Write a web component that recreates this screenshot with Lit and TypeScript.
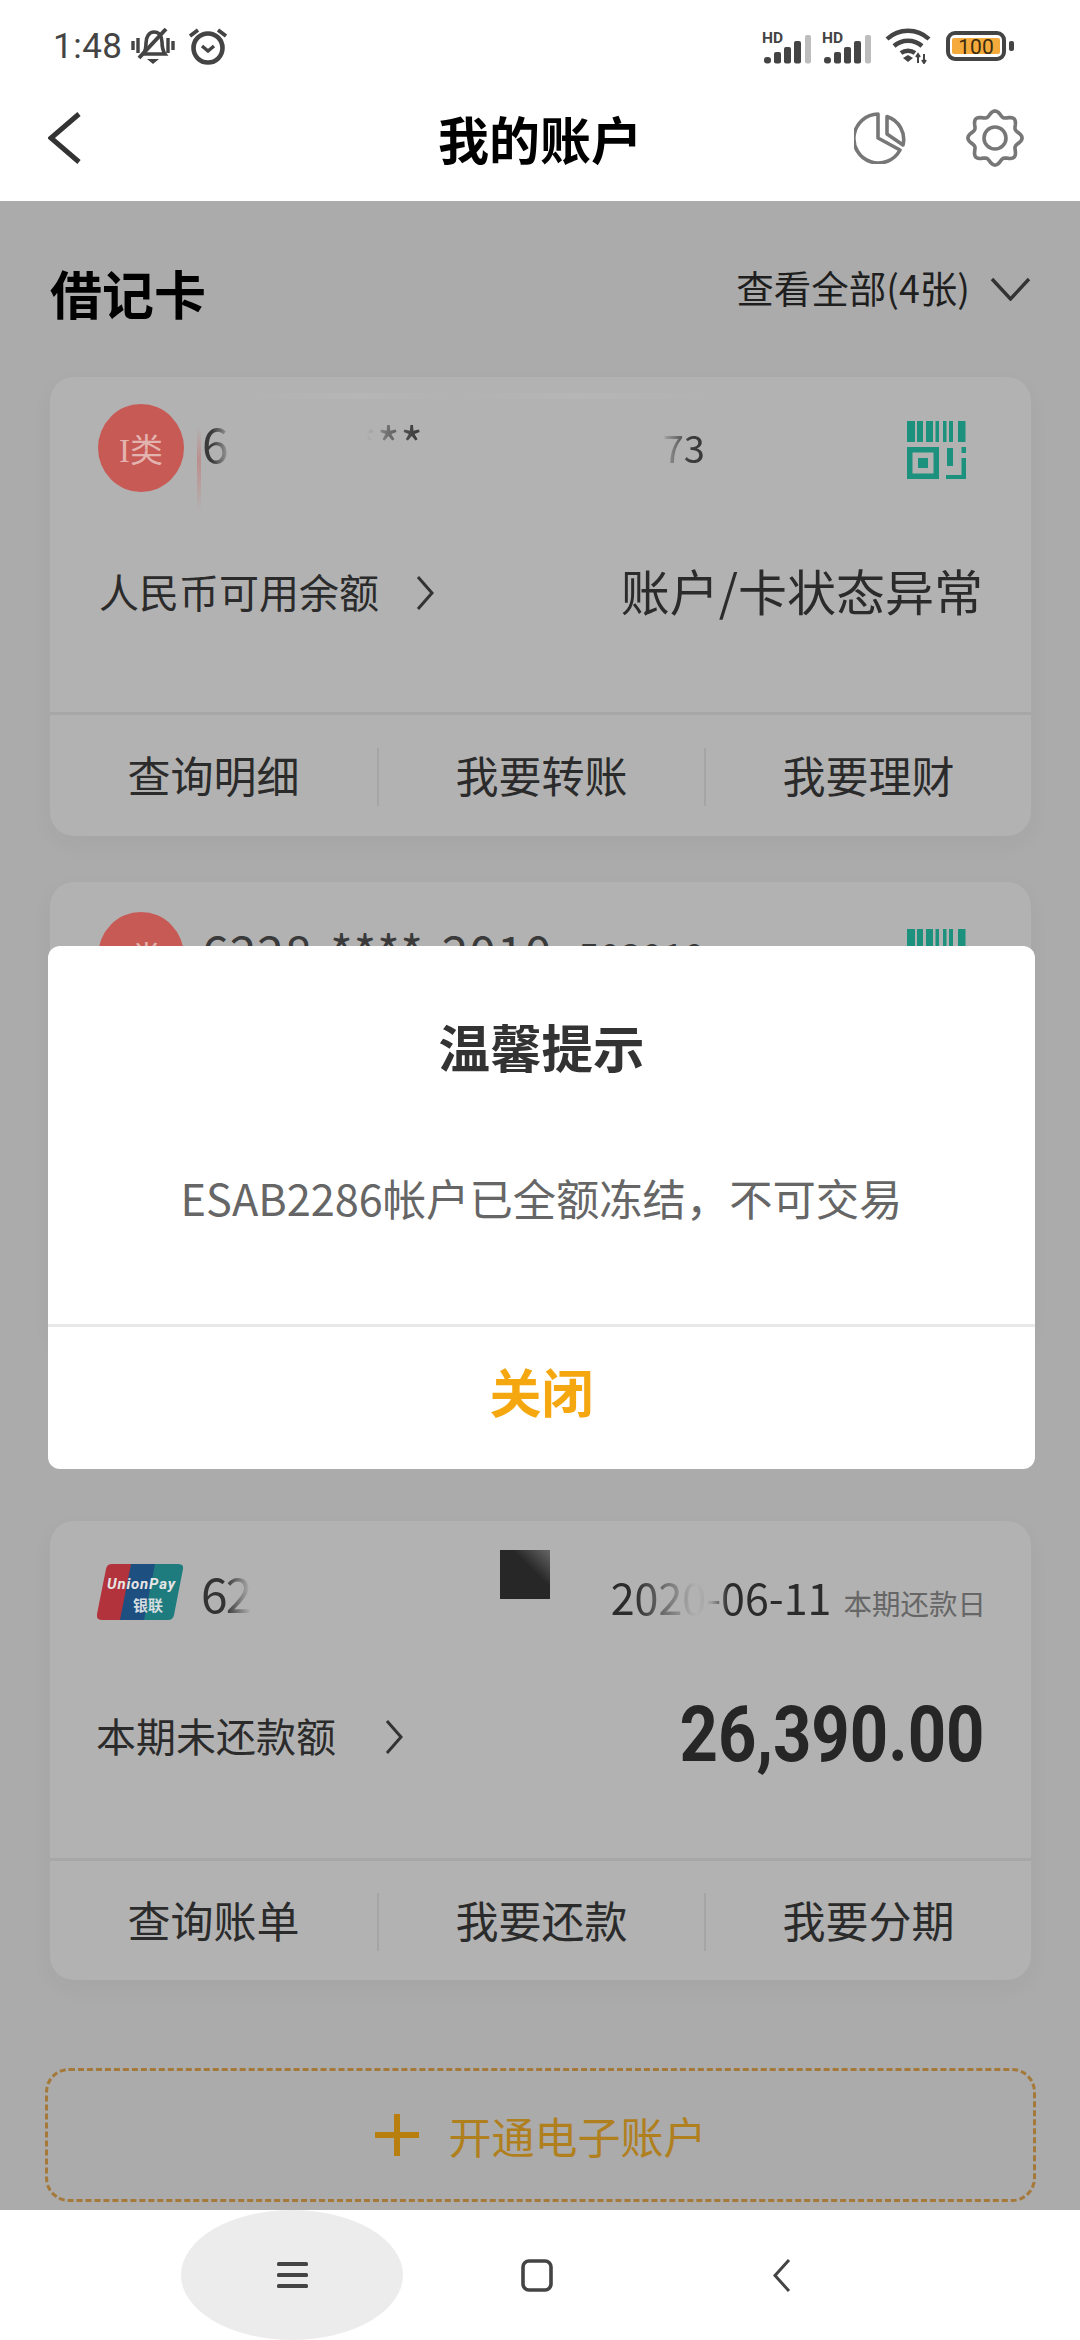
import { LitElement, html, css, svg } from 'lit';
import { customElement } from 'lit/decorators.js';

// wavy outline for the settings gear
function gearPath(cx: number, cy: number) {
  const pts: string[] = [];
  for (let i = 0; i < 96; i++) {
    const a = (i / 96) * Math.PI * 2 - Math.PI / 2;
    const r = 24.5 + 2.6 * Math.cos(8 * (a + Math.PI / 2));
    pts.push(`${(cx + r * Math.cos(a)).toFixed(2)},${(cy + r * Math.sin(a)).toFixed(2)}`);
  }
  return `M${pts.join('L')}Z`;
}

const signal = svg`
  <svg class="signal" width="50" height="36" viewBox="0 -4 50 36">
    <text x="0" y="11" font-family="Roboto, sans-serif" font-weight="700" font-size="15.500" fill="#444">HD</text>
    <rect x="2" y="25" width="7" height="6.500" rx="3" fill="#444"/>
    <rect x="12" y="20" width="7" height="11.500" rx="2" fill="#444"/>
    <rect x="22" y="15" width="7" height="16.500" rx="2" fill="#444"/>
    <rect x="32" y="9" width="7" height="22.500" rx="2" fill="#444"/>
    <rect x="43" y="3" width="6" height="28.500" rx="2" fill="#bdbdbd"/>
  </svg>`;

const qrIcon = svg`
  <svg class="qr" width="59" height="58" viewBox="0 0 59 58" fill="#1c917d">
    <rect x="0" y="0" width="8" height="21"/><rect x="10" y="0" width="6" height="21"/>
    <rect x="19" y="0" width="7" height="21"/><rect x="28.500" y="0" width="3.500" height="21"/>
    <rect x="36" y="0" width="3.500" height="21"/><rect x="42" y="0" width="4" height="21"/>
    <rect x="51" y="0" width="7.500" height="21"/>
    <path d="M0 26h32v32H0zM5.500 31.500v21h21v-21zM11 37h10v10H11z" fill-rule="evenodd"/>
    <rect x="40" y="27" width="6" height="18"/>
    <rect x="54.500" y="26" width="4.500" height="6"/>
    <rect x="54.500" y="37" width="4.500" height="21"/>
    <rect x="39" y="54" width="20" height="4"/>
  </svg>`;

const chevronRight = svg`
  <svg class="chev" width="18" height="34" viewBox="0 0 18 34" fill="none" stroke="#333" stroke-width="3">
    <path d="M2 1l14 16L2 33"/>
  </svg>`;

@customElement('app-root')
export class AppRoot extends LitElement {
  static styles = css`
    :host {
      display: block;
      width: 1080px;
      height: 2340px;
      position: relative;
      overflow: hidden;
      font-family: 'Noto Sans CJK SC', 'Noto Sans', sans-serif;
      color: #2b2b2b;
    }
    .page {
      display: flex;
      flex-direction: column;
      height: 100%;
    }
    .top {
      background: #fff;
      height: 201px;
      flex: none;
    }
    .status {
      display: flex;
      align-items: center;
      height: 92px;
      padding: 0 66px 0 53px;
      box-sizing: border-box;
    }
    .time {
      font-family: Roboto, sans-serif;
      font-size: 35px;
      color: #444;
      letter-spacing: 0.5px;
      margin-right: 8px;
    }
    .status .alarm {
      margin-left: 13px;
    }
    .status-right {
      margin-left: auto;
      display: flex;
      align-items: center;
    }
    .signal + .signal {
      margin-left: 10px;
    }
    .wifi {
      margin-left: 13px;
    }
    .battery {
      margin-left: 15px;
    }
    .bar {
      display: flex;
      align-items: center;
      height: 92px;
      padding: 0 56px 0 48px;
    }
    .title {
      position: absolute;
      left: 0;
      width: 1080px;
      text-align: center;
      font-size: 51px;
      font-weight: 700;
      color: #000;
      line-height: 88px;
    }
    .bar-icons {
      margin-left: auto;
      display: flex;
      align-items: center;
      gap: 60px;
    }
    .content {
      flex: 1;
      background: #ababab;
      padding: 0 49px 0 50px;
      overflow: hidden;
    }
    .sec-head {
      height: 176px;
      display: flex;
      align-items: center;
      justify-content: space-between;
    }
    .sec-title {
      font-size: 52px;
      font-weight: 700;
      color: #000;
      padding-top: 6px;
    }
    .view-all {
      display: flex;
      align-items: center;
      gap: 20px;
      font-size: 37.500px;
      color: #1f1f1f;
    }
    .view-all span {
      padding-bottom: 5px;
    }
    .card {
      position: relative;
      height: 459px;
      margin-bottom: 46px;
      background: #b2b2b2;
      border-radius: 24px;
      box-shadow: 0 8px 24px rgba(0, 0, 0, 0.035);
      display: flex;
      flex-direction: column;
      overflow: hidden;
    }
    .card.credit {
      margin-top: 180px;
      margin-bottom: 88px;
    }
    .head {
      position: relative;
      height: 142px;
      flex: none;
      box-sizing: border-box;
      display: flex;
      align-items: center;
      padding: 0 65px 0 48px;
    }
    .head.second {
      padding-top: 6px;
    }
    .avatar {
      width: 86px;
      height: 88px;
      border-radius: 50%;
      background: #c75a55;
      color: #e3b3af;
      font-size: 33px;
      font-family: 'Liberation Serif', 'Noto Sans CJK SC', serif;
      display: flex;
      align-items: center;
      justify-content: center;
      flex: none;
    }
    .smear {
      position: absolute;
      left: 147px;
      top: 50px;
      width: 4px;
      height: 84px;
      background: linear-gradient(#c75a5500, #c75a5566 40%, #c75a5500);
    }
    .ghost {
      position: absolute;
      left: 190px;
      top: 16px;
      width: 480px;
      height: 6px;
      background: linear-gradient(90deg, transparent, #b6b6b6 25%, transparent 45%, #b6b6b6 70%, transparent);
    }
    .num {
      margin-left: 18px;
      margin-bottom: 8px;
      font-size: 48px;
      line-height: 60px;
      letter-spacing: 1px;
      word-spacing: 6px;
      color: #3a3a3a;
      white-space: nowrap;
      display: flex;
      align-items: baseline;
      gap: 26px;
    }
    .num small {
      font-size: 38px;
      letter-spacing: 0;
    }
    .num.masked {
      -webkit-mask-image: linear-gradient(90deg, #000 10px, transparent 30px, transparent 165px, #0008 185px, #000 215px, transparent 232px, transparent 458px, #000 488px);
      mask-image: linear-gradient(90deg, #000 10px, transparent 30px, transparent 165px, #0008 185px, #000 215px, transparent 232px, transparent 458px, #000 488px);
    }
    .qr {
      margin-left: auto;
      flex: none;
      margin-top: 3px;
    }
    .balance {
      height: 148px;
      flex: none;
      display: flex;
      align-items: center;
      padding: 0 48px 0 49px;
    }
    .balance.credit-row {
      padding: 0 46px 0 46px;
    }
    .label {
      font-size: 40px;
      padding-bottom: 5px;
    }
    .chev {
      margin-left: 37px;
    }
    .credit-row .chev {
      margin-left: 49px;
    }
    .value {
      margin-left: auto;
      font-size: 49px;
      padding-bottom: 8px;
    }
    .amount {
      margin-left: auto;
      font-family: Roboto, sans-serif;
      font-size: 77px;
      font-weight: 700;
      line-height: 90px;
      padding-bottom: 4px;
      color: #262626;
      transform: scaleX(0.87);
      transform-origin: right center;
    }
    .actions {
      margin-top: auto;
      height: 124px;
      padding-top: 3px;
      flex: none;
      box-sizing: border-box;
      border-top: 3px solid #a7a7a7;
      display: grid;
      grid-template-columns: 1fr 1fr 1fr;
      align-items: center;
    }
    .actions.credit-actions {
      height: 122px;
    }
    .actions span {
      text-align: center;
      font-size: 43px;
      line-height: 52px;
      padding-bottom: 6px;
    }
    .actions span + span {
      border-left: 2px solid #a5a5a5;
    }
    .logo {
      flex: none;
      margin-left: -1px;
    }
    .credit-head {
      padding: 0 45px 0 48px;
    }
    .card-no {
      margin-left: 18px;
      font-size: 48px;
      letter-spacing: -2px;
      color: #333;
      white-space: nowrap;
      width: 240px;
      overflow: hidden;
      -webkit-mask-image: linear-gradient(90deg, #000 24px, transparent 50px);
      mask-image: linear-gradient(90deg, #000 24px, transparent 50px);
    }
    .patch {
      position: absolute;
      left: 450px;
      top: 29px;
      width: 50px;
      height: 49px;
      background: linear-gradient(to top right, #272727 62%, #666);
    }
    .due {
      margin-left: auto;
      display: flex;
      align-items: baseline;
      gap: 12px;
      padding-top: 8px;
    }
    .due-date {
      font-size: 43px;
      color: #2b2b2b;
      -webkit-mask-image: linear-gradient(90deg, #000 22px, transparent 85px, #0002 100px, #000 118px);
      mask-image: linear-gradient(90deg, #000 22px, transparent 85px, #0002 100px, #000 118px);
    }
    .due-label {
      font-size: 28.500px;
      color: #666;
    }
    .add {
      margin: 0 -5px 0 -5px;
      height: 134px;
      box-sizing: border-box;
      border: 3px dashed #a5793a;
      border-radius: 24px;
      display: flex;
      align-items: center;
      justify-content: center;
      gap: 30px;
      font-size: 43px;
      color: #b07f1e;
    }
    .nav {
      height: 130px;
      flex: none;
      background: #fff;
      display: flex;
      gap: 23px;
      padding-left: 181px;
    }
    .nav-item {
      width: 222px;
      height: 130px;
      display: flex;
      align-items: center;
      justify-content: center;
    }
    .nav-item.active {
      background: #ececec;
      border-radius: 50%;
    }
    .overlay-modal {
      position: absolute;
      left: 48px;
      top: 946px;
      width: 987px;
      height: 523px;
      background: #fff;
      border-radius: 12px;
      display: flex;
      flex-direction: column;
      text-align: center;
    }
    .m-title {
      font-size: 51.500px;
      font-weight: 700;
      color: #333;
      line-height: 60px;
      padding-top: 70px;
    }
    .m-body {
      font-size: 43.300px;
      color: #666;
      line-height: 60px;
      margin-top: 91px;
    }
    .m-close {
      margin-top: auto;
      height: 145px;
      box-sizing: border-box;
      border-top: 3px solid #e8e8e8;
      padding-bottom: 16px;
      display: flex;
      align-items: center;
      justify-content: center;
      font-size: 52px;
      font-weight: 700;
      color: #f5a70f;
    }
  `;

  actions(items: string[], cls = '') {
    return html`<div class="actions ${cls}">${items.map((t) => html`<span>${t}</span>`)}</div>`;
  }

  render() {
    return html`
      <div class="page">
        <div class="top">
          <div class="status">
            <span class="time">1:48</span>
            <svg width="44" height="38" viewBox="0 0 44 38" fill="none" stroke="#444">
              <path d="M2 14v9M7 11v15M37 11v15M42 14v9" stroke-width="3.400"/>
              <path d="M12 27c3-3 3-7 3-11 0-6 3-11 8-11s8 4 8 10c0 5 1 9 3 12z" stroke-width="3.600"/>
              <path d="M8 31L35 2" stroke-width="4"/>
              <path d="M16 32h12l-6 5z" fill="#444" stroke="none"/>
            </svg>
            <svg class="alarm" width="40" height="38" viewBox="0 0 40 38" fill="none" stroke="#444">
              <circle cx="20" cy="21" r="14.500" stroke-width="4.600"/>
              <path d="M14 19l6 5 6-5" stroke-width="3.400"/>
              <path d="M2 9l8-6M38 9l-8-6" stroke-width="3.800"/>
            </svg>
            <div class="status-right">
              ${signal}${signal}
              <svg class="wifi" width="46" height="36" viewBox="0 0 46 36" fill="none" stroke="#444" stroke-width="4.400">
                <path d="M2 11C14 0 32 0 44 11"/>
                <path d="M9 18c8-7 20-7 28 0"/>
                <path d="M16 25c4-3 10-3 14 0"/>
                <path d="M18 30l5-3 5 3-5 4z" fill="#444" stroke="none"/>
                <path d="M33 35v-8M31 29l2-3 2 3M39 26v8M37 32l2 3 2-3" stroke-width="2"/>
              </svg>
              <svg class="battery" width="68" height="30" viewBox="0 0 68 30">
                <rect x="2" y="2" width="56" height="26" rx="7" fill="none" stroke="#444" stroke-width="4"/>
                <rect x="6" y="7" width="48" height="16" rx="2" fill="#f5ab3c"/>
                <rect x="63" y="10" width="5" height="10" rx="2" fill="#444"/>
                <text x="30" y="22.500" text-anchor="middle" font-family="Roboto, sans-serif" font-size="21" fill="#3a2c10">100</text>
              </svg>
            </div>
          </div>
          <div class="bar">
            <span class="title">我的账户</span>
            <svg width="34" height="52" viewBox="0 0 34 52" fill="none" stroke="#333" stroke-width="5">
              <path d="M31 2L3 26l28 24"/>
            </svg>
            <div class="bar-icons">
              <svg width="52" height="52" viewBox="0 0 52 52" fill="none" stroke="#777" stroke-width="3.600" stroke-linejoin="round">
                <path d="M24 2A24.500 24.500 0 1 0 46 38L24 26Z"/>
                <path d="M33 4.500A24 24 0 0 1 49 33L33 22Z"/>
              </svg>
              <svg width="58" height="58" viewBox="0 0 58 58" fill="none" stroke="#777" stroke-width="3.600">
                <path d=${gearPath(29, 29)}/>
                <circle cx="29" cy="29" r="11"/>
              </svg>
            </div>
          </div>
        </div>

        <div class="content">
          <div class="sec-head">
            <span class="sec-title">借记卡</span>
            <div class="view-all"><span>查看全部(4张)</span>
              <svg width="41" height="24" viewBox="0 0 41 24" fill="none" stroke="#333" stroke-width="3.400">
                <path d="M2 2l18.500 20L39 2"/>
              </svg>
            </div>
          </div>

          <div class="card">
            <div class="head">
              <div class="ghost"></div>
              <div class="avatar">I类</div>
              <div class="smear"></div>
              <div class="num masked"><span>6228 **** 3010</span><small>503073</small></div>
              ${qrIcon}
            </div>
            <div class="balance">
              <span class="label">人民币可用余额</span>${chevronRight}
              <span class="value">账户/卡状态异常</span>
            </div>
            ${this.actions(['查询明细', '我要转账', '我要理财'])}
          </div>

          <div class="card">
            <div class="head second">
              <div class="avatar">I类</div>
              <div class="num"><span>6228 **** 2010</span><small>503010</small></div>
              ${qrIcon}
            </div>
          </div>

          <div class="card credit">
            <div class="head credit-head">
              <svg class="logo" width="86" height="56" viewBox="0 0 86 56">
                <path d="M15 0h26l-11 56H5q-6 0-5-6L9 5q1-5 6-5z" fill="#b3333d"/>
                <path d="M34 0h28L51 56H23z" fill="#1d4f80"/>
                <path d="M58 0h23q6 0 5 5L77 51q-1 5-6 5H47z" fill="#1f7c7e"/>
                <text x="10" y="25" font-family="Roboto, sans-serif" font-size="15" font-weight="700" font-style="italic" fill="#e6e6e6" textLength="68">UnionPay</text>
                <text x="36" y="47" font-family="'Noto Sans CJK SC', sans-serif" font-size="15" font-weight="700" fill="#d5dde0">银联</text>
              </svg>
              <div class="card-no">6250 ****</div>
              <div class="patch"></div>
              <div class="due">
                <span class="due-date">2020-06-11</span>
                <span class="due-label">本期还款日</span>
              </div>
            </div>
            <div class="balance credit-row">
              <span class="label">本期未还款额</span>${chevronRight}
              <span class="amount">26,390.00</span>
            </div>
            ${this.actions(['查询账单', '我要还款', '我要分期'], 'credit-actions')}
          </div>

          <div class="add">
            <svg width="44" height="42" viewBox="0 0 44 42" fill="#b87f0e">
              <rect x="0" y="18" width="44" height="6"/><rect x="19" y="0" width="6" height="42"/>
            </svg>
            <span>开通电子账户</span>
          </div>
        </div>

        <div class="nav">
          <div class="nav-item active">
            <svg width="31" height="26" viewBox="0 0 31 26" fill="#444">
              <rect y="0" width="31" height="4" rx="1.500"/><rect y="11" width="31" height="4" rx="1.500"/><rect y="22" width="31" height="4" rx="1.500"/>
            </svg>
          </div>
          <div class="nav-item">
            <svg width="32" height="33" viewBox="0 0 32 33" fill="none" stroke="#444" stroke-width="3.600">
              <rect x="2" y="2" width="28" height="29" rx="6"/>
            </svg>
          </div>
          <div class="nav-item">
            <svg width="18" height="33" viewBox="0 0 18 33" fill="none" stroke="#444" stroke-width="3">
              <path d="M16 1L2 16.500 16 32"/>
            </svg>
          </div>
        </div>
      </div>

      <div class="overlay-modal">
        <div class="m-title">温馨提示</div>
        <div class="m-body">ESAB2286帐户已全额冻结，不可交易</div>
        <div class="m-close">关闭</div>
      </div>
    `;
  }
}
